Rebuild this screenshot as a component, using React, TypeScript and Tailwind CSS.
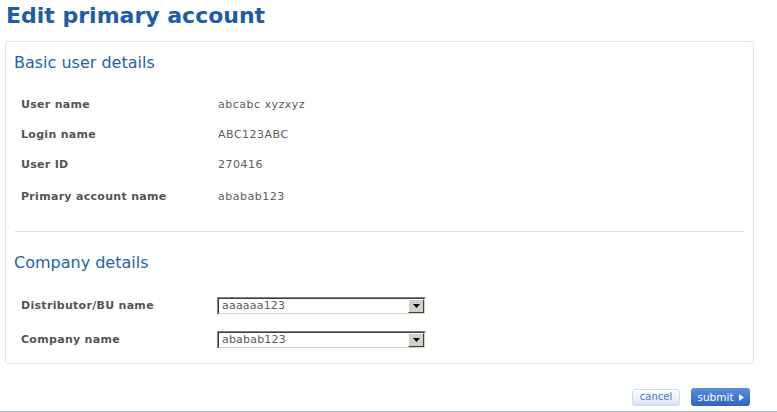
import React from 'react';

const font = { fontFamily: '"DejaVu Sans", Verdana, sans-serif' };

function InfoRow({ label, value, className = '' }: { label: string; value: string; className?: string }) {
  return (
    <div className={`flex h-[30px] items-center pl-[15px] ${className}`}>
      <div className="w-[197px] text-[11px] leading-[14px] font-bold tracking-[0.3px] text-[#545454]">{label}</div>
      <div className="text-[11px] leading-[14px] tracking-[0.5px] text-[#5c5c5c] whitespace-pre">{value}</div>
    </div>
  );
}

function ClassicSelect({ value }: { value: string }) {
  return (
    <div className="w-[209px] h-[18px] border border-t-[#808080] border-l-[#808080] border-b-white border-r-white">
      <div className="flex h-full border border-t-[#404040] border-l-[#404040] border-b-[#d4d0c8] border-r-[#d4d0c8] bg-white">
        <div className="flex-1 pl-[3px] text-[11px] leading-[14px] tracking-[0.2px] text-[#5c5c5c]">{value}</div>
        <div className="flex w-[16px] items-center justify-center bg-[#d4d0c8] border border-t-white border-l-white border-b-[#404040] border-r-[#404040]">
          <svg width="7" height="4" viewBox="0 0 7 4">
            <polygon points="0,0 7,0 3.5,4" fill="#000" />
          </svg>
        </div>
      </div>
    </div>
  );
}

function SelectRow({ label, value }: { label: string; value: string }) {
  return (
    <div className="flex h-[18px] items-center pl-[15px]">
      <div className="w-[196px] text-[11px] leading-[14px] font-bold tracking-[0.3px] text-[#545454]">{label}</div>
      <ClassicSelect value={value} />
    </div>
  );
}

export default function App() {
  return (
    <div className="flex h-[412px] w-[777px] flex-col overflow-hidden bg-white" style={font}>
      <h1 className="pl-[6px] pt-[3px] text-[22px] leading-[26px] font-bold text-[#1d5ca6]">Edit primary account</h1>

      {/* Details card */}
      <div className="ml-[5px] mt-[12px] w-[749px] rounded-[3px] border border-[#e4e4e4] pt-[11px] pb-[14px]">
        <h2 className="pl-[8px] text-[16px] leading-[20px] text-[#2463a9]">Basic user details</h2>
        <div className="mt-[17px]">
          <InfoRow label="User name" value="abcabc xyzxyz" />
          <InfoRow label="Login name" value="ABC123ABC" />
          <InfoRow label="User ID" value="270416" />
          <InfoRow label="Primary account name" value="ababab123" className="mt-[2px]" />
        </div>

        <div className="mx-[9px] mt-[19px] border-t border-[#dedede]" />

        <h2 className="mt-[21px] pl-[8px] text-[16px] leading-[20px] text-[#2463a9]">Company details</h2>
        <div className="mt-[24px] flex flex-col gap-[16px]">
          <SelectRow label="Distributor/BU name" value="aaaaaa123" />
          <SelectRow label="Company name" value="ababab123" />
        </div>
      </div>

      {/* Actions */}
      <div className="mt-[24px] flex items-center justify-end gap-[11px] pr-[27px]">
        <button className="h-[17px] w-[48px] rounded-[3px] border border-[#cfdcec] bg-gradient-to-b from-white to-[#d5e3f5] text-[10px] leading-[14px] text-[#4a7cc3]">
          cancel
        </button>
        <button className="flex h-[18px] w-[59px] items-center justify-center gap-[5px] rounded-[3px] bg-gradient-to-b from-[#5b8fdc] to-[#2e63c1] text-[10.5px] leading-[14px] text-white">
          <span>submit</span>
          <svg width="5" height="7" viewBox="0 0 5 7">
            <polygon points="0,0 5,3.5 0,7" fill="#fff" />
          </svg>
        </button>
      </div>

      <div className="mt-auto h-px w-full bg-[#b3c2cf]" />
    </div>
  );
}
